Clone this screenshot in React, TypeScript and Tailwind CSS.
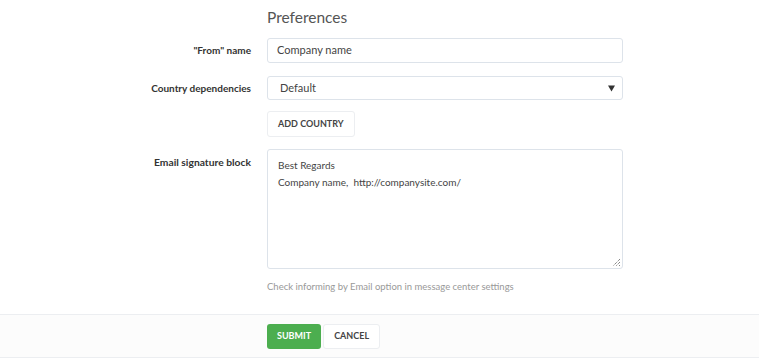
import React from "react";

export default function App() {
  const font = { fontFamily: 'Lato, "Noto Sans", sans-serif' };
  return (
    <div className="w-[759px] h-[360px] bg-white flex flex-col text-[#333]" style={font}>
      <div className="flex-1 flex flex-col">
        <div className="flex mt-[7px]">
          <div className="w-[251px]" />
          <div className="ml-[16px] text-[15.5px] leading-[20px] text-[#555] font-normal">Preferences</div>
        </div>
        <div className="flex items-center mt-[11px]">
          <div className="w-[251px] text-right text-[10px] font-bold text-[#333]">"From" name</div>
          <div className="ml-[16px] w-[356px] h-[25px] border border-[#dde3ea] rounded-[3px] flex items-center px-[9px] text-[11px] text-[#444]">
            Company name
          </div>
        </div>
        <div className="flex items-center mt-[13px]">
          <div className="w-[251px] text-right text-[10px] font-bold text-[#333]">Country dependencies</div>
          <div className="ml-[16px] w-[356px] h-[24px] border border-[#dde3ea] rounded-[3px] flex items-center justify-between pl-[12px] pr-[7px] text-[11px] text-[#444]">
            <span>Default</span>
            <svg width="7" height="7" viewBox="0 0 7 7"><path d="M0 0.5 H7 L3.5 6.5 Z" fill="#333" /></svg>
          </div>
        </div>
        <div className="flex mt-[11px]">
          <div className="w-[251px]" />
          <button className="ml-[16px] h-[26px] px-[10px] border border-[#eceef1] rounded-[3px] bg-white text-[9px] font-bold text-[#444] uppercase">
            ADD COUNTRY
          </button>
        </div>
        <div className="flex mt-[12px]">
          <div className="w-[251px] text-right text-[10.3px] font-bold text-[#333] pt-[6px]">Email signature block</div>
          <div className="ml-[16px] w-[356px] h-[120px] border border-[#dde3ea] rounded-[3px] px-[10px] pt-[7px] text-[10px] leading-[17px] text-[#444] relative">
            <div>Best Regards</div>
            <div>Company name,&nbsp; http://companysite.com/</div>
            <svg className="absolute right-[1px] bottom-[1px]" width="9" height="9" viewBox="0 0 9 9">
              <path d="M8 1 L1 8 M8 4 L4 8 M8 7 L7 8" stroke="#555" strokeWidth="1" strokeDasharray="1 1" />
            </svg>
          </div>
        </div>
        <div className="flex mt-[11px]">
          <div className="w-[251px]" />
          <div className="ml-[16px] text-[9.5px] text-[#999]">Check informing by Email option in message center settings</div>
        </div>
      </div>
      <div className="h-[44px] border-t border-b border-[#eceef1] bg-[#fcfcfc] flex items-center mb-[2px]">
        <div className="w-[267px]" />
        <button className="h-[25px] px-[10px] rounded-[3px] bg-[#4cae4f] text-white text-[9px] font-bold">SUBMIT</button>
        <button className="ml-[2px] h-[25px] px-[10px] rounded-[3px] bg-white border border-[#eceef1] text-[#444] text-[9px] font-bold">CANCEL</button>
      </div>
    </div>
  );
}
